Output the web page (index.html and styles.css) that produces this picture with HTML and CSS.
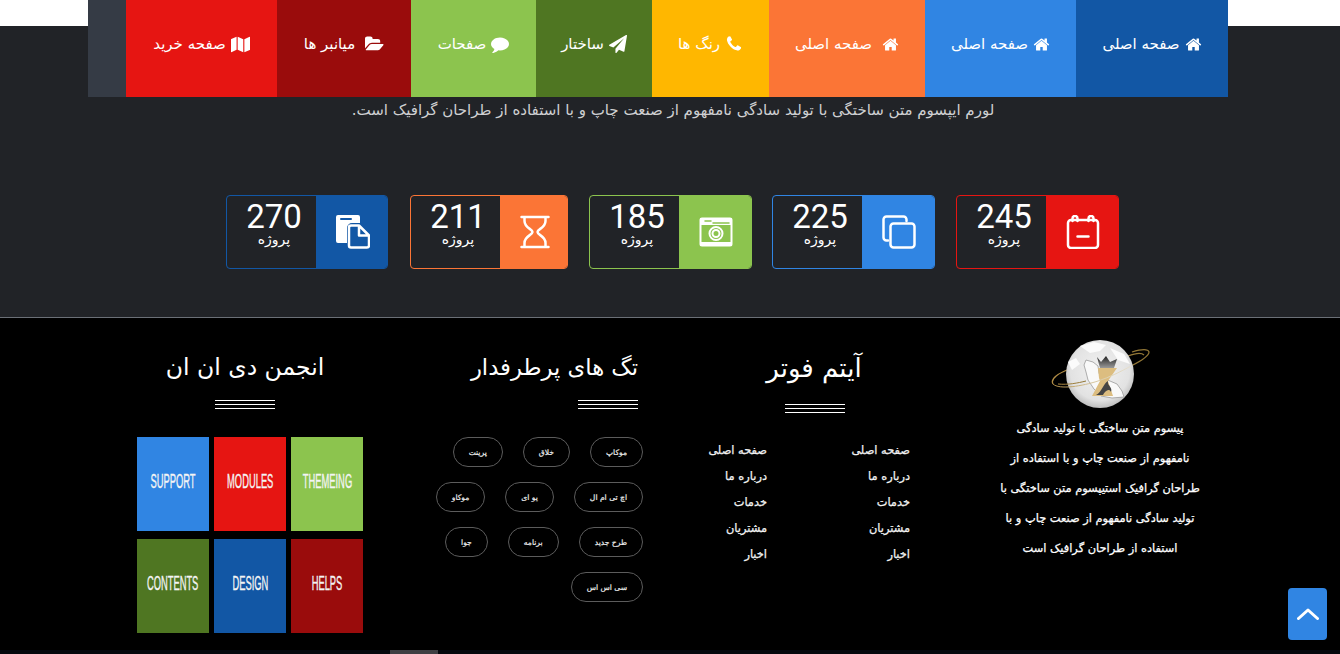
FILE: index.html
```html
<!DOCTYPE html>
<html lang="fa" dir="rtl">
<head>
<meta charset="utf-8">
<title>Footer</title>
<link rel="stylesheet" href="styles.css">
</head>
<body>
<svg class="sprite" aria-hidden="true">
  <symbol id="i-home" viewBox="0 0 1792 1792"><path d="M1472 992v480q0 26-19 45t-45 19h-384v-384h-256v384h-384q-26 0-45-19t-19-45v-480q0-1 .5-3t.5-3l575-474 575 474q1 2 1 6zm223-69l-62 74q-8 9-21 11h-3q-13 0-21-7l-692-577-692 577q-12 8-24 7-13-2-21-11l-62-74q-8-10-7-23.5t11-21.5l719-599q32-26 76-26t76 26l244 204v-195q0-14 9-23t23-9h192q14 0 23 9t9 23v408l219 182q10 8 11 21.5t-7 23.5z"/></symbol>
  <symbol id="i-phone" viewBox="0 0 1792 1792"><path d="M1600 1240q0 27-10 70.5t-21 68.5q-21 50-122 106-94 51-186 51-27 0-53-3.5t-57.5-12.5-47-14.5-55.5-20.5-49-18q-98-35-175-83-127-79-264-216t-216-264q-48-77-83-175-3-9-18-49t-20.5-55.5-14.5-47-12.5-57.5-3.5-53q0-92 51-186 56-101 106-122 25-11 68.5-21t70.5-10q14 0 21 3 18 6 53 76 11 19 30 54t35 63.5 31 53.5q3 4 17.5 25t21.5 35.5 7 28.5q0 20-28.5 50t-62 55-62 53-28.5 46q0 9 5 22.5t8.5 20.5 14 24 11.5 19q76 137 174 235t235 174q2 1 19 11.5t24 14 20.5 8.5 22.5 5q18 0 46-28.5t53-62 55-62 50-28.5q14 0 28.5 7t35.5 21.5 25 17.5q25 15 53.5 31t63.5 35 54 30q70 35 76 53 3 7 3 21z"/></symbol>
  <symbol id="i-comment" viewBox="0 0 1792 1792"><path d="M1792 896q0 174-120 321.5t-326 233-450 85.5q-70 0-145-8-198 175-460 242-49 14-114 22-17 2-30.5-9t-17.5-29v-1q-3-4-.5-12t2-10 4.5-9.5l6-9 7-8.5 8-9q7-8 31-34.5t34.5-38 31-39.5 32.5-51 27-59 26-76q-157-89-247.5-220t-90.5-281q0-130 71-248.5t191-204.5 286-136.5 348-50.5q244 0 450 85.5t326 233 120 321.5z"/></symbol>
  <symbol id="i-plane" viewBox="0 0 1792 1792"><path d="M1764 11q33 24 27 64l-256 1536q-5 29-32 45-14 8-31 8-11 0-24-5l-453-185-242 295q-18 23-49 23-13 0-22-4-19-7-30.5-23.5t-11.5-36.5v-349l864-1059-1069 925-395-162q-37-14-40-55-2-40 32-59l1664-960q15-9 32-9 20 0 36 11z"/></symbol>
  <symbol id="i-folder" viewBox="0 0 1920 1792"><path d="M1879 952q0 31-31 66l-336 396q-43 51-120.5 86.5t-143.5 35.5h-1088q-34 0-60.5-13t-26.5-43q0-31 31-66l336-396q43-51 120.5-86.5t143.5-35.5h1088q34 0 60.5 13t26.5 43zm-343-344v160h-832q-94 0-197 47.5t-164 119.5l-337 396-5 6q0-4-.5-12.5t-.5-12.5v-960q0-92 66-158t158-66h320q92 0 158 66t66 158v32h544q92 0 158 66t66 158z"/></symbol>
  <symbol id="i-map" viewBox="0 0 2048 1792"><path d="M600 60v1400L40 1720q-40 12-40-40V340q0-30 30-44zM720 60l600 270v1400l-600-270zM2048 110v1340q0 30-30 44l-578 236V330l568-260q40-12 40 40z"/></symbol>
</svg>

<div class="hero">
  <nav class="nav">
    <a class="nav-item navy"><svg class="ni ni-home"><use href="#i-home"/></svg>صفحه اصلی</a>
    <a class="nav-item blue"><svg class="ni ni-home"><use href="#i-home"/></svg>صفحه اصلی</a>
    <a class="nav-item orange wide-gap"><svg class="ni ni-home"><use href="#i-home"/></svg>صفحه اصلی</a>
    <a class="nav-item yellow"><svg class="ni"><use href="#i-phone"/></svg>رنگ ها</a>
    <a class="nav-item dkgreen"><svg class="ni"><use href="#i-plane"/></svg>ساختار</a>
    <a class="nav-item green"><svg class="ni"><use href="#i-comment"/></svg>صفحات</a>
    <a class="nav-item dkred wide-gap"><svg class="ni ni-folder"><use href="#i-folder"/></svg>میانبر ها</a>
    <a class="nav-item red"><svg class="ni ni-map"><use href="#i-map"/></svg>صفحه خرید</a>
    <span class="nav-end"></span>
  </nav>
  <p class="lead">لورم ایپسوم متن ساختگی با تولید سادگی نامفهوم از صنعت چاپ و با استفاده از طراحان گرافیک است.</p>

  <section class="stats">
    <div class="stat b-red">
      <div class="stat-icon red">
        <svg class="si" viewBox="0 0 34 34"><rect x="2" y="5" width="30" height="28" rx="3"/><path d="M6.500 6V3.500a2.500 2.500 0 0 1 5 0V6M22.500 6V3.500a2.500 2.500 0 0 1 5 0V6M11.500 21.500h11"/></svg>
      </div>
      <div class="stat-text"><b class="num">245</b><span class="lbl">پروژه</span></div>
    </div>
    <div class="stat b-blue">
      <div class="stat-icon blue">
        <svg class="si" viewBox="0 0 34 34"><rect x="8.500" y="8.500" width="24" height="24" rx="3"/><path d="M6 25.500H4.500a3 3 0 0 1-3-3V4.500a3 3 0 0 1 3-3h17a3 3 0 0 1 3 3V6"/></svg>
      </div>
      <div class="stat-text"><b class="num">225</b><span class="lbl">پروژه</span></div>
    </div>
    <div class="stat b-green">
      <div class="stat-icon green">
        <svg class="si" viewBox="0 0 34 34"><rect x="1.500" y="3.500" width="31" height="27" rx="1.500" class="thin"/><path class="band" d="M1 3h32v7H1zM1 27h32v4H1z"/><path class="hole" d="M6 6h6M14 8h16"/><circle cx="17" cy="18.500" r="6.500" class="ring"/><circle cx="17" cy="18.500" r="3.500" class="thin"/></svg>
      </div>
      <div class="stat-text"><b class="num">185</b><span class="lbl">پروژه</span></div>
    </div>
    <div class="stat b-orange">
      <div class="stat-icon orange narrow">
        <svg class="si" viewBox="0 0 30 34"><path d="M1.500 2h27M1.500 32h27M4.500 2v4c0 7 8 8 8 11s-8 4-8 11v4M25.500 2v4c0 7-8 8-8 11s8 4 8 11v4"/></svg>
      </div>
      <div class="stat-text"><b class="num">211</b><span class="lbl">پروژه</span></div>
    </div>
    <div class="stat b-navy">
      <div class="stat-icon navy slim">
        <svg class="si" viewBox="0 0 34 34"><path class="solid" d="M2 0h20a2 2 0 0 1 2 2v6h-8a5 5 0 0 0-5 5v15H2a2 2 0 0 1-2-2V2a2 2 0 0 1 2-2z"/><path d="M13 12.500a2 2 0 0 1 2-2h8l10 10v10a2 2 0 0 1-2 2H15a2 2 0 0 1-2-2zM23 11v9.500h10"/><path class="navy-line" d="M5 4h10"/></svg>
      </div>
      <div class="stat-text"><b class="num">270</b><span class="lbl">پروژه</span></div>
    </div>
  </section>
</div>

<footer class="footer">
  <div class="f-col about">
    <svg class="logo" viewBox="0 0 100 72" role="img" aria-label="logo">
      <defs>
        <radialGradient id="globe" cx="50%" cy="45%" r="58%"><stop offset="0" stop-color="#f2f2f2"/><stop offset="0.75" stop-color="#e2e2e2"/><stop offset="1" stop-color="#b5b5b5"/></radialGradient>
        <linearGradient id="gold" x1="0" x2="1"><stop offset="0" stop-color="#b08c45"/><stop offset="1" stop-color="#8f7434"/></linearGradient>
        <linearGradient id="goldfade" x1="0" x2="1"><stop offset="0" stop-color="#b08c45"/><stop offset="0.55" stop-color="#d8c9a4"/><stop offset="1" stop-color="#e6e0d0"/></linearGradient>
        <linearGradient id="crown" x1="0" x2="0" y1="0" y2="1"><stop offset="0" stop-color="#222"/><stop offset="1" stop-color="#999"/></linearGradient>
      </defs>
      <path d="M22 30C8 35 0 41 3 46M82 14c10-3 16-3 17 0 0 4-8 9-18 14M78 18c8-3 14-3 16-1" fill="none" stroke="url(#gold)" stroke-width="1.300"/>
      <circle cx="50" cy="36" r="34" fill="url(#globe)"/>
      <path d="M30 8l14-4 12 3-6 6-10 2zM60 10l14 6 6 10-12-4zM18 24l8-4 4 6-8 6z" fill="#fbfbfb"/>
      <path d="M36 22l7 2 5 4 1 7 2 5 9 3 7 3 5 7 2 6-12 1-11-2-7-7-6-9-2-8-2-7z" fill="#f9f9f9" stroke="#9a9a9a" stroke-width="0.800"/>
      <path d="M48 30h19l-7 10-2 3 5 15H42l8-15-1-3z" fill="#dcbd80"/>
      <path d="M47 19l4 5 5-6 4 6 7-3-3 9H50z" fill="url(#crown)"/>
      <path d="M46 57c6-3 7-11 12-14-1 5 5 6 3 11-2-4-6-1-8 3z" fill="#444"/>
      <path d="M3 46c6 6 30 2 45-3 12-4 22-9 33-15" fill="none" stroke="url(#goldfade)" stroke-width="1"/>
      <path d="M8 46c10 1 20-1 28-3" fill="none" stroke="url(#gold)" stroke-width="1"/>
    </svg>
    <p class="about-text">پیسوم متن ساختگی با تولید سادگی<br>نامفهوم از صنعت چاپ و با استفاده از<br>طراحان گرافیک استیپسوم متن ساختگی با<br>تولید سادگی نامفهوم از صنعت چاپ و با<br>استفاده از طراحان گرافیک است</p>
  </div>

  <div class="f-col links-col">
    <h3 class="f-title big">آیتم فوتر</h3>
    <div class="rule"></div>
    <div class="links">
      <ul><li>صفحه اصلی</li><li>درباره ما</li><li>خدمات</li><li>مشتریان</li><li>اخبار</li></ul>
      <ul><li>صفحه اصلی</li><li>درباره ما</li><li>خدمات</li><li>مشتریان</li><li>اخبار</li></ul>
    </div>
  </div>

  <div class="f-col tags-col">
    <h3 class="f-title">تگ های پرطرفدار</h3>
    <div class="rule"></div>
    <div class="tags">
      <a class="tag">موکاپ</a><a class="tag">خلاق</a><a class="tag">پرینت</a>
      <a class="tag">اچ تی ام ال</a><a class="tag">یو ای</a><a class="tag">موکاو</a>
      <a class="tag">طرح جدید</a><a class="tag">برنامه</a><a class="tag">جوا</a>
      <a class="tag">سی اس اس</a>
    </div>
  </div>

  <div class="f-col forum-col">
    <h3 class="f-title">انجمن دی ان ان</h3>
    <div class="rule"></div>
    <div class="tiles">
      <div class="tile green"><span>THEMEING</span></div>
      <div class="tile red"><span>MODULES</span></div>
      <div class="tile blue"><span>SUPPORT</span></div>
      <div class="tile dkred"><span>HELPS</span></div>
      <div class="tile navy"><span>DESIGN</span></div>
      <div class="tile dkgreen"><span>CONTENTS</span></div>
    </div>
  </div>

  <span class="stub"></span>
</footer>

<a class="to-top" aria-label="top"><svg viewBox="0 0 22 12"><path d="M1.500 10.500L11 2l9.500 8.500"/></svg></a>
</body>
</html>
```

FILE: styles.css
```css
* { box-sizing: border-box; }
html, body { margin: 0; height: 654px; overflow: hidden; }
body {
  background: #000;
  color: #fff;
  font-family: "DejaVu Sans", "Noto Sans", sans-serif;
}
.sprite { display: none; }

.navy { background: #1257a5; }
.blue { background: #3085e3; }
.orange { background: #fb7536; }
.yellow { background: #ffb700; }
.dkgreen { background: #4f7622; }
.green { background: #8cc44e; }
.dkred { background: #9a0c0c; }
.red { background: #e61512; }

.hero {
  height: 317px;
  background: linear-gradient(#fff 26px, #212327 26px);
}

.nav {
  display: flex;
  height: 97px;
  width: 1140px;
  margin-right: 112px;
  background: #353b45;
}
.nav-item {
  display: flex;
  align-items: center;
  justify-content: center;
  gap: 5px;
  height: 97px;
  padding-bottom: 9px;
  font-size: 15px;
  font-weight: 400;
  color: #fff;
}
.nav-item:nth-child(1) { width: 152px; }
.nav-item:nth-child(2) { width: 151px; }
.nav-item:nth-child(3) { width: 156px; }
.nav-item:nth-child(4) { width: 117px; }
.nav-item:nth-child(5) { width: 116px; }
.nav-item:nth-child(6) { width: 125px; }
.nav-item:nth-child(7) { width: 134px; }
.nav-item:nth-child(8) { width: 151px; }
.wide-gap { gap: 10px; }
.nav-end { flex: 1; }
.ni { width: 18px; height: 18px; fill: #fff; flex: none; }
.ni-home { width: 17px; height: 17px; }
.ni-folder { width: 19px; }
.ni-map { width: 19px; height: 17px; }

.lead {
  margin: 3px 0 0;
  text-align: center;
  padding-left: 6px;
  font-size: 15px;
  line-height: 20px;
  color: #cfd0d2;
}

.stats {
  display: flex;
  gap: 21px;
  margin: 75px 221px 0 0;
}
.stat {
  display: flex;
  height: 74px;
  border: 1px solid;
  border-radius: 4px;
  overflow: hidden;
}
.stat-icon {
  display: flex;
  align-items: center;
  justify-content: center;
  width: 72px;
  padding-left: 2px;
}
.stat-icon.narrow { width: 67px; }
.stat-icon.slim { width: 71px; }
.stat-text {
  width: 89px;
  display: flex;
  flex-direction: column;
  align-items: center;
  padding: 4px 0 0 5px;
}
.num {
  font-family: Roboto, sans-serif;
  font-weight: 400;
  font-size: 33px;
  line-height: 34px;
}
.lbl { font-size: 14px; line-height: 12px; margin-top: -1px; }
.b-red { border-color: #e61512; }
.b-blue { border-color: #3085e3; }
.b-green { border-color: #8cc44e; margin-right: -1px; }
.b-orange { border-color: #fb7536; }
.b-navy { border-color: #1257a5; margin-right: 1px; }
.si { width: 34px; height: 34px; fill: none; stroke: #fff; stroke-width: 2.500; stroke-linecap: round; stroke-linejoin: round; }
.si .solid { fill: #fff; stroke: none; }
.si .navy-line { stroke: #1257a5; stroke-width: 2; }
.si .thin { stroke-width: 2; }
.si .band { fill: #fff; stroke: none; }
.si .hole { stroke: #8cc44e; stroke-width: 1.500; }
.si .ring { stroke-width: 2; }

.footer {
  position: relative;
  height: 337px;
  border-top: 1px solid #6b7077;
  display: grid;
  grid-template-columns: repeat(4, 285px);
  width: 1340px;
  padding-right: 100px;
  justify-content: start;
  background: linear-gradient(#000 332px, #05070d 332px);
}
.f-col { min-width: 0; }

.about { display: flex; flex-direction: column; align-items: center; padding-top: 20px; margin-right: -5px; }
.logo { width: 100px; height: 72px; display: block; }
.about-text {
  margin: 3px 0 0;
  text-align: center;
  font-size: 11.400px;
  -webkit-text-stroke: 0.25px #fff;
  line-height: 30px;
  white-space: nowrap;
}

.f-title {
  margin: 0;
  padding-top: 31px;
  font-size: 22.700px;
  line-height: 36px;
  font-weight: 400;
  white-space: nowrap;
}
.f-title.big { font-size: 26px; line-height: 40px; padding-top: 30px; }
.forum-col .f-title { font-size: 23.500px; }
.rule {
  width: 60px;
  height: 9px;
  margin-top: 15px;
  border-top: 1px solid #fff;
  border-bottom: 1px solid #fff;
  background: linear-gradient(#fff, #fff) center / 100% 1px no-repeat;
}

.links-col { text-align: center; padding-right: 91px; }
.links-col .f-title { width: 100px; }
.links-col .rule { margin-right: 19px; margin-top: 16px; }
.links { display: flex; margin-top: 24px; margin-right: -46px; }
.links ul { list-style: none; margin: 0; padding: 0; width: 143px; flex: none; text-align: right; }
.links li { font-size: 11.400px; -webkit-text-stroke: 0.25px #f2f2f2; line-height: 26px; color: #f2f2f2; white-space: nowrap; }

.tags-col { padding-right: 32px; }
.tags {
  display: flex;
  flex-wrap: wrap;
  gap: 15px 20px;
  width: 215px;
  margin: 28px -5px 0 0;
}
.tag {
  display: flex;
  align-items: center;
  justify-content: center;
  height: 30px;
  padding: 0 15px;
  border: 1px solid #5c5c5c;
  border-radius: 15px;
  font-size: 7.600px;
  -webkit-text-stroke: 0.2px #eee;
  color: #eee;
  white-space: nowrap;
}

.forum-col { display: flex; flex-direction: column; align-items: center; margin-right: -5px; }
.tiles {
  display: grid;
  grid-template-columns: repeat(3, 72px);
  grid-auto-rows: 94px;
  column-gap: 5px;
  row-gap: 8px;
  margin: 28px 0 0 10px;
}
.tile {
  display: flex;
  align-items: center;
  justify-content: center;
  direction: ltr;
  font-family: "Liberation Sans", sans-serif;
  font-size: 19.500px;
  -webkit-text-stroke: 0.35px #f4f4f4;
  color: #f4f4f4;
  padding-bottom: 5px;
  overflow: hidden;
}
.tile span { display: inline-block; transform: scaleX(0.48); }

.stub {
  position: absolute;
  left: 390px;
  bottom: 0;
  width: 48px;
  height: 4px;
  background: #3f3f43;
}

.to-top {
  position: fixed;
  left: 1288px;
  top: 588px;
  width: 39px;
  height: 52px;
  border-radius: 4px;
  background: #3085e3;
  display: flex;
  align-items: center;
  justify-content: center;
}
.to-top svg { width: 22px; height: 12px; fill: none; stroke: #fff; stroke-width: 3; stroke-linecap: round; stroke-linejoin: round; }
```
